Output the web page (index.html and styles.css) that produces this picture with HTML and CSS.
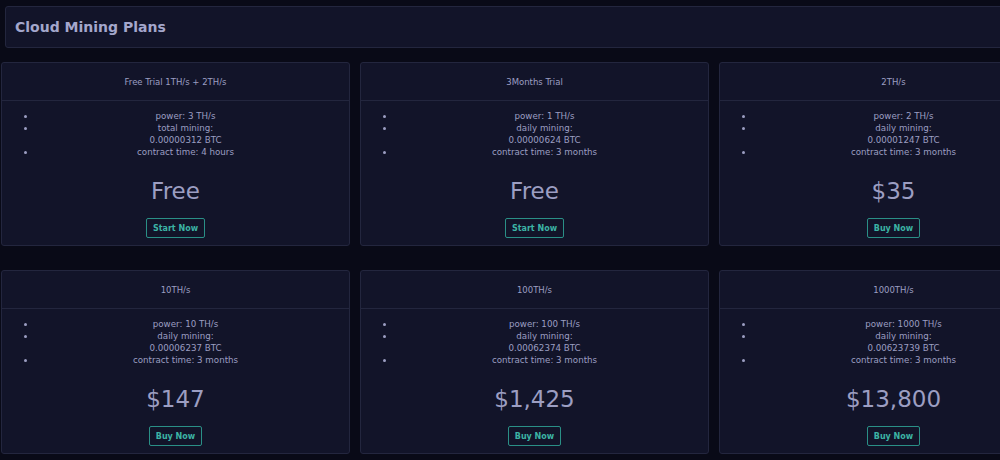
FILE: index.html
```html
<!DOCTYPE html>
<html>
<head>
  <link rel="stylesheet" href="styles.css">
</head>
<body>
  <div class="page">
    <div class="page-header">
      <h1>Cloud Mining Plans</h1>
    </div>

    <div class="plans">
      <div class="plan">
        <div class="plan-title">Free Trial 1TH/s + 2TH/s</div>
        <div class="plan-body">
          <ul>
            <li>power: 3 TH/s</li>
            <li>total mining:<br>0.00000312 BTC</li>
            <li>contract time: 4 hours</li>
          </ul>
          <div class="price">Free</div>
        </div>
        <div class="plan-footer"><button class="btn">Start Now</button></div>
      </div>

      <div class="plan">
        <div class="plan-title">3Months Trial</div>
        <div class="plan-body">
          <ul>
            <li>power: 1 TH/s</li>
            <li>daily mining:<br>0.00000624 BTC</li>
            <li>contract time: 3 months</li>
          </ul>
          <div class="price">Free</div>
        </div>
        <div class="plan-footer"><button class="btn">Start Now</button></div>
      </div>

      <div class="plan">
        <div class="plan-title">2TH/s</div>
        <div class="plan-body">
          <ul>
            <li>power: 2 TH/s</li>
            <li>daily mining:<br>0.00001247 BTC</li>
            <li>contract time: 3 months</li>
          </ul>
          <div class="price">$35</div>
        </div>
        <div class="plan-footer"><button class="btn">Buy Now</button></div>
      </div>

      <div class="plan">
        <div class="plan-title">10TH/s</div>
        <div class="plan-body">
          <ul>
            <li>power: 10 TH/s</li>
            <li>daily mining:<br>0.00006237 BTC</li>
            <li>contract time: 3 months</li>
          </ul>
          <div class="price">$147</div>
        </div>
        <div class="plan-footer"><button class="btn">Buy Now</button></div>
      </div>

      <div class="plan">
        <div class="plan-title">100TH/s</div>
        <div class="plan-body">
          <ul>
            <li>power: 100 TH/s</li>
            <li>daily mining:<br>0.00062374 BTC</li>
            <li>contract time: 3 months</li>
          </ul>
          <div class="price">$1,425</div>
        </div>
        <div class="plan-footer"><button class="btn">Buy Now</button></div>
      </div>

      <div class="plan">
        <div class="plan-title">1000TH/s</div>
        <div class="plan-body">
          <ul>
            <li>power: 1000 TH/s</li>
            <li>daily mining:<br>0.00623739 BTC</li>
            <li>contract time: 3 months</li>
          </ul>
          <div class="price">$13,800</div>
        </div>
        <div class="plan-footer"><button class="btn">Buy Now</button></div>
      </div>
    </div>
  </div>
</body>
</html>
```

FILE: styles.css
```css
:root {
  --page-bg: #090a17;
  --card-bg: #121429;
  --card-border: #23263e;
  --text: #9c9ec2;
  --heading: #a4a7cc;
  --accent: #3cb3a4;
  --accent-border: #2a8f86;
}

html {
  overflow: hidden;
}

body {
  margin: 0;
  background: var(--page-bg);
  color: var(--text);
  font-family: 'DejaVu Sans', sans-serif;
}

.page {
  width: 1067px;
  padding: 6px 0 0 5px;
}

.page-header {
  height: 40px;
  display: flex;
  align-items: center;
  padding-left: 9px;
  background: var(--card-bg);
  border: 1px solid var(--card-border);
  border-radius: 3px;
}

.page-header h1 {
  margin: 0;
  font-size: 14px;
  font-weight: 700;
  color: var(--heading);
}

.plans {
  display: grid;
  grid-template-columns: repeat(3, 349px);
  column-gap: 10px;
  row-gap: 24px;
  margin: 14px 0 0 -4px;
}

.plan {
  height: 184px;
  box-sizing: border-box;
  display: flex;
  flex-direction: column;
  background: var(--card-bg);
  border: 1px solid var(--card-border);
  border-radius: 3px;
}

.plan-title {
  height: 37px;
  display: flex;
  align-items: center;
  justify-content: center;
  font-size: 8.5px;
  border-bottom: 1px solid var(--card-border);
}

.plan-body {
  padding-top: 9px;
}

.plan-body ul {
  margin: 0 14px 0 0;
  padding-left: 34px;
  list-style: disc;
}

.plan-body li {
  font-size: 8.7px;
  line-height: 12px;
  text-align: center;
}

.price {
  margin-top: 18px;
  font-size: 23px;
  line-height: 30px;
  text-align: center;
}

.plan-footer {
  display: flex;
  justify-content: center;
  margin-top: 12px;
}

.btn {
  height: 20px;
  padding: 0 6px;
  font-family: inherit;
  font-size: 8px;
  font-weight: 600;
  color: var(--accent);
  background: transparent;
  border: 1px solid var(--accent-border);
  border-radius: 2px;
  cursor: pointer;
}
```
